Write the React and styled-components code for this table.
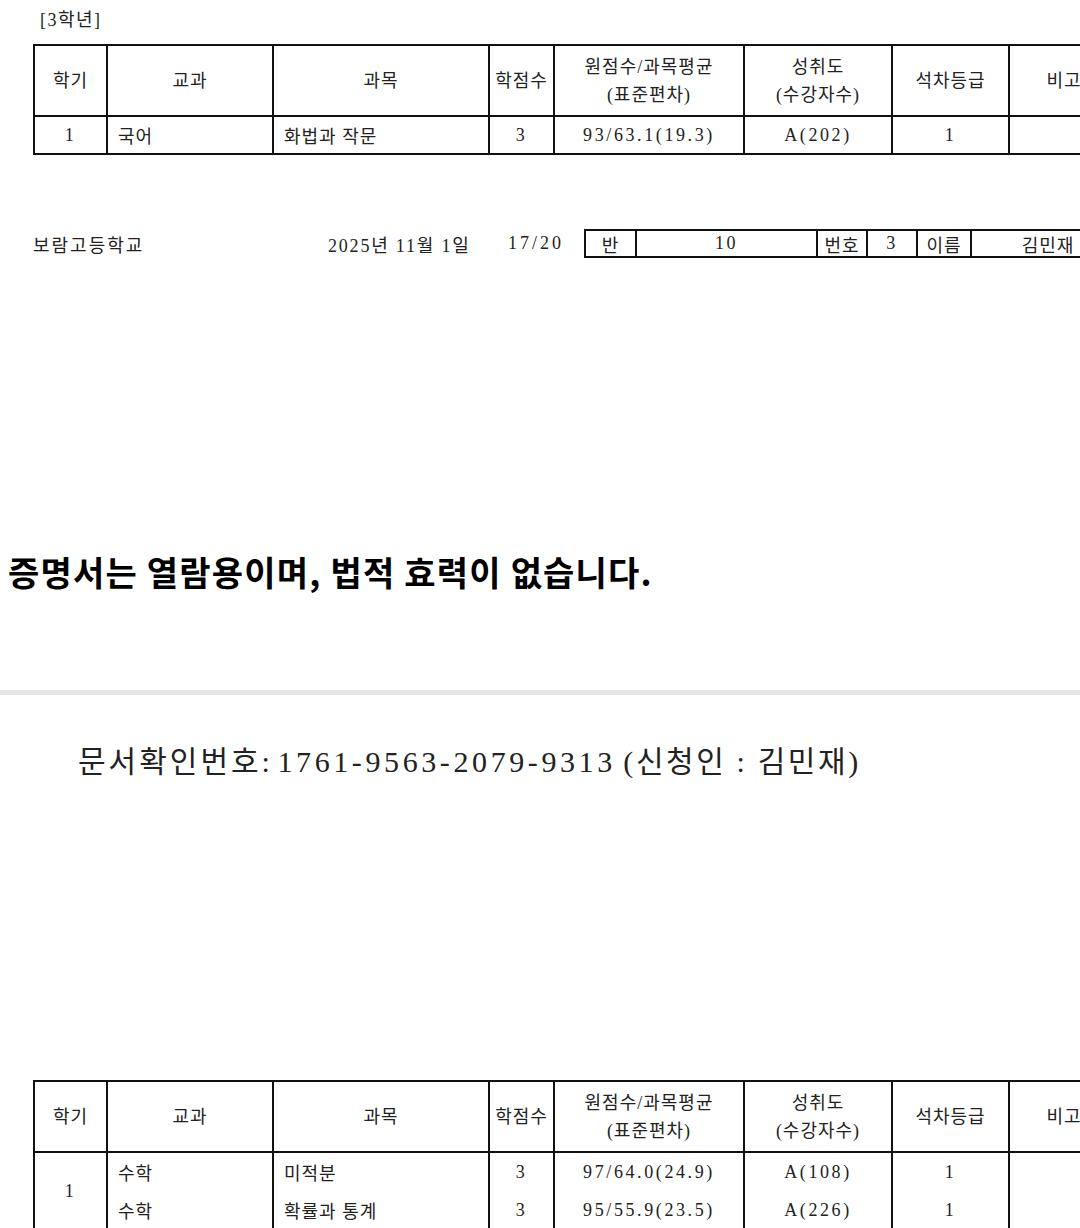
import React from "react";
import styled, { createGlobalStyle } from "styled-components";

const GlobalStyle = createGlobalStyle`
  html, body {
    margin: 0;
    padding: 0;
    background: #ffffff;
  }
  body {
    overflow-x: hidden;
    font-family: "Liberation Serif", "Noto Sans CJK KR", serif;
    color: #222;
  }
`;

const Page = styled.div`
  width: 1080px;
  overflow: hidden;
`;

const Section = styled.div`
  padding-left: 33px;
`;

const GradeLabel = styled.div`
  padding-top: 8px;
  margin-left: 7px;
  font-size: 18px;
  letter-spacing: 1.5px;
  line-height: 24px;
  height: 24px;
  margin-bottom: 12px;
`;

const Table = styled.table`
  border-collapse: separate;
  border-spacing: 0;
  table-layout: fixed;
  width: 1085px;
  border-top: 2px solid #111;
  border-left: 2px solid #111;
  margin-top: ${(p) => p.$top || 0}px;
  font-size: 18px;
  letter-spacing: 1px;
`;

const Th = styled.th`
  font-weight: 400;
  height: 69px;
  padding: 0;
  line-height: 28px;
  text-align: center;
  border-right: 2px solid #111;
  border-bottom: 2px solid #111;
  white-space: nowrap;
`;

const Td = styled.td`
  height: ${(p) => p.$h || 36}px;
  padding: 0 ${(p) => (p.$left ? "10px" : "0")};
  text-align: ${(p) => (p.$left ? "left" : "center")};
  border-right: 2px solid #111;
  border-bottom: ${(p) => (p.$open ? "none" : "2px solid #111")};
  letter-spacing: ${(p) => (p.$num ? "2.6px" : "1px")};
  white-space: nowrap;
  vertical-align: middle;
`;

const InfoRow = styled.div`
  display: flex;
  align-items: center;
  margin-top: 74px;
  font-size: 18px;
  white-space: nowrap;
`;

const InfoText = styled.span`
  flex: none;
  width: ${(p) => p.$w}px;
  letter-spacing: ${(p) => p.$ls || 1}px;
`;

const InfoBox = styled.div`
  flex: none;
  display: flex;
  height: 25px;
  border: 2px solid #111;
  border-right: none;
`;

const InfoCell = styled.div`
  width: ${(p) => p.$w}px;
  flex: none;
  display: flex;
  align-items: center;
  justify-content: center;
  border-right: ${(p) => (p.$last ? "none" : "2px solid #111")};
  font-size: 18px;
  letter-spacing: ${(p) => (p.$num ? "2.5px" : "1px")};
`;

const Notice = styled.div`
  margin-top: 293px;
  padding-left: 8px;
  font-family: "Noto Sans CJK KR", "Liberation Sans", sans-serif;
  font-weight: 700;
  font-size: 34px;
  letter-spacing: 1.2px;
  line-height: 42px;
  color: #000;
  white-space: nowrap;
`;

const Divider = styled.div`
  margin-top: 97px;
  height: 5px;
  background: #e6e6e6;
`;

const DocNumber = styled.div`
  margin-top: 47px;
  padding-left: 78px;
  font-size: 30px;
  line-height: 40px;
  white-space: pre;
`;

const Spaced = styled.span`
  letter-spacing: ${(p) => p.$ls}px;
`;

const cols = [73, 166, 216, 65, 190, 148, 117, 110];

const Cols = () => (
  <colgroup>
    {cols.map((w, i) => (
      <col key={i} style={{ width: w }} />
    ))}
  </colgroup>
);

const Header = () => (
  <thead>
    <tr>
      <Th>학기</Th>
      <Th>교과</Th>
      <Th>과목</Th>
      <Th>학점수</Th>
      <Th>
        원점수/과목평균
        <br />
        (표준편차)
      </Th>
      <Th>
        성취도
        <br />
        (수강자수)
      </Th>
      <Th>석차등급</Th>
      <Th>비고</Th>
    </tr>
  </thead>
);

const bottomRows = [
  { area: "수학", subject: "미적분", credit: 3, score: "97/64.0(24.9)", ach: "A(108)", rank: 1 },
  { area: "수학", subject: "확률과 통계", credit: 3, score: "95/55.9(23.5)", ach: "A(226)", rank: 1 },
];

const App = () => (
  <Page>
    <GlobalStyle />
    <Section>
      <GradeLabel>[3학년]</GradeLabel>
      <Table>
        <Cols />
        <Header />
        <tbody>
          <tr>
            <Td $num>1</Td>
            <Td $left>국어</Td>
            <Td $left>화법과 작문</Td>
            <Td $num>3</Td>
            <Td $num>93/63.1(19.3)</Td>
            <Td $num>A(202)</Td>
            <Td $num>1</Td>
            <Td />
          </tr>
        </tbody>
      </Table>

      <InfoRow>
        <InfoText $w={295} $ls={2}>
          보람고등학교
        </InfoText>
        <InfoText $w={180} $ls={1.8}>
          2025년 11월 1일
        </InfoText>
        <InfoText $w={76} $ls={3}>
          17/20
        </InfoText>
        <InfoBox>
          <InfoCell $w={49}>반</InfoCell>
          <InfoCell $w={179} $num>
            10
          </InfoCell>
          <InfoCell $w={48}>번호</InfoCell>
          <InfoCell $w={48} $num>
            3
          </InfoCell>
          <InfoCell $w={52}>이름</InfoCell>
          <InfoCell $w={152} $last>
            김민재
          </InfoCell>
        </InfoBox>
      </InfoRow>
    </Section>

    <Notice>증명서는 열람용이며, 법적 효력이 없습니다.</Notice>

    <Divider />

    <DocNumber>
      <Spaced $ls={3}>문서확인번호</Spaced>
      {": "}
      <Spaced $ls={3.6}>1761-9563-2079-9313</Spaced>
      {" "}
      <Spaced $ls={2.6}>(신청인 : 김민재)</Spaced>
    </DocNumber>

    <Section>
      <Table $top={298}>
        <Cols />
        <Header />
        <tbody>
          {bottomRows.map((r, i) => (
            <tr key={i}>
              {i === 0 && (
                <Td rowSpan={2} $num>
                  1
                </Td>
              )}
              <Td $left $h={38} $open={i === 0}>
                {r.area}
              </Td>
              <Td $left $h={38} $open={i === 0}>
                {r.subject}
              </Td>
              <Td $num $h={38} $open={i === 0}>
                {r.credit}
              </Td>
              <Td $num $h={38} $open={i === 0}>
                {r.score}
              </Td>
              <Td $num $h={38} $open={i === 0}>
                {r.ach}
              </Td>
              <Td $num $h={38} $open={i === 0}>
                {r.rank}
              </Td>
              <Td $h={38} $open={i === 0} />
            </tr>
          ))}
        </tbody>
      </Table>
    </Section>
  </Page>
);

export default App;
